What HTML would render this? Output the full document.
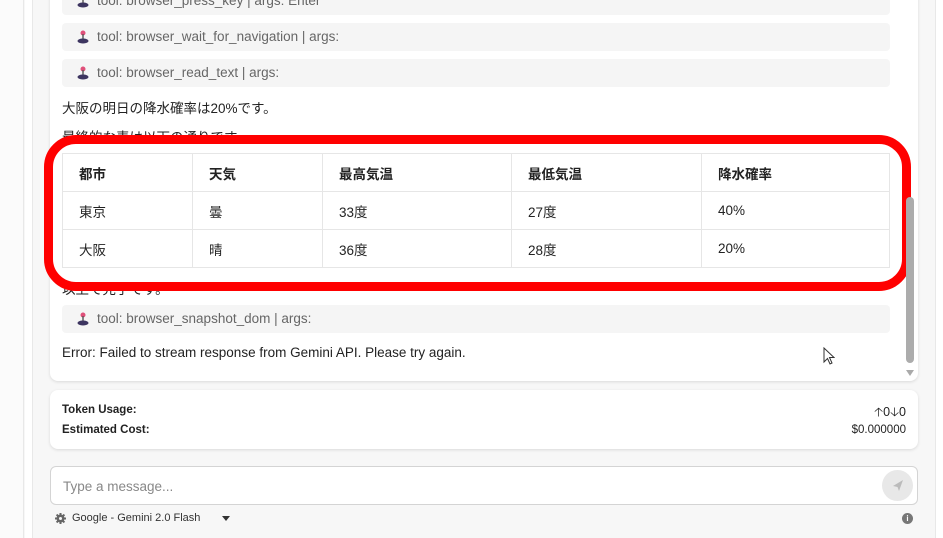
<!DOCTYPE html>
<html><head><meta charset="utf-8"><style>
*{box-sizing:border-box;margin:0;padding:0}
body{width:943px;height:538px;overflow:hidden;background:#f7f7f7;font-family:"Liberation Sans","Noto Sans CJK JP",sans-serif;position:relative;font-size:13.5px;color:#222}
.abs{position:absolute}
.tool{position:absolute;left:62px;width:828px;height:28px;background:#f5f5f5;border-radius:4px;color:#666;font-size:13.5px;line-height:28px;padding-left:35px}
.tool svg{position:absolute;left:15px;top:7px}
table{border-collapse:collapse;position:absolute;left:62px;top:153px;width:828px;font-size:13.5px}
td,th{border:1px solid #e6e6e6;height:38px;padding-left:16px;text-align:left}
th{font-weight:bold}
</style></head><body>
<div class="abs" style="left:0;top:0;width:24px;height:538px;background:#fbfbfb;border-right:1px solid #e8e8e8"></div>
<div class="abs" style="left:25px;top:0;width:8px;height:538px;background:#fff;border-right:1px solid #e8e8e8"></div>
<div class="abs" style="left:935px;top:0;width:8px;height:538px;background:#fff;border-left:1px solid #e8e8e8"></div>
<div class="abs" style="left:50px;top:-10px;width:868px;height:391px;background:#fff;border-radius:8px;box-shadow:0 1px 3px rgba(0,0,0,.12)"></div>
<div class="tool" style="top:-13px">tool: browser_press_key | args: Enter<svg width="12" height="14" viewBox="0 0 12 14"><circle cx="6" cy="3" r="2.5" fill="#e0507a"/><rect x="5.3" y="4" width="1.4" height="5" fill="#555"/><ellipse cx="6" cy="11" rx="5.5" ry="2.5" fill="#3d3560"/></svg></div>
<div class="tool" style="top:23px">tool: browser_wait_for_navigation | args:<svg width="12" height="14" viewBox="0 0 12 14"><circle cx="6" cy="3" r="2.5" fill="#e0507a"/><rect x="5.3" y="4" width="1.4" height="5" fill="#555"/><ellipse cx="6" cy="11" rx="5.5" ry="2.5" fill="#3d3560"/></svg></div>
<div class="tool" style="top:59px">tool: browser_read_text | args:<svg width="12" height="14" viewBox="0 0 12 14"><circle cx="6" cy="3" r="2.5" fill="#e0507a"/><rect x="5.3" y="4" width="1.4" height="5" fill="#555"/><ellipse cx="6" cy="11" rx="5.5" ry="2.5" fill="#3d3560"/></svg></div>
<div class="abs" style="left:62px;top:97px">大阪の明日の降水確率は20%です。</div>
<div class="abs" style="left:62px;top:126px">最終的な表は以下の通りです。</div>
<div class="abs" style="left:62px;top:278px">以上で完了です。</div>
<table>
<tr><th style="width:130px">都市</th><th style="width:130px">天気</th><th style="width:189px">最高気温</th><th style="width:190px">最低気温</th><th>降水確率</th></tr>
<tr><td>東京</td><td>曇</td><td>33度</td><td>27度</td><td>40%</td></tr>
<tr><td>大阪</td><td>晴</td><td>36度</td><td>28度</td><td>20%</td></tr>
</table>
<div class="abs" style="left:44px;top:135px;width:867px;height:156px;border:9px solid #ff0000;border-radius:32px"></div>
<div class="tool" style="top:305px">tool: browser_snapshot_dom | args:<svg width="12" height="14" viewBox="0 0 12 14"><circle cx="6" cy="3" r="2.5" fill="#e0507a"/><rect x="5.3" y="4" width="1.4" height="5" fill="#555"/><ellipse cx="6" cy="11" rx="5.5" ry="2.5" fill="#3d3560"/></svg></div>
<div class="abs" style="left:62px;top:345px">Error: Failed to stream response from Gemini API. Please try again.</div>
<div class="abs" style="left:906px;top:197px;width:8px;height:166px;background:#acacac;border-radius:4px"></div>
<div class="abs" style="left:906px;top:370px;width:0;height:0;border-left:4px solid transparent;border-right:4px solid transparent;border-top:6px solid #aaa"></div>
<svg class="abs" style="left:823px;top:347px" width="12" height="20" viewBox="0 0 12 20"><path d="M1 1 L1 15 L4.5 11.5 L7 17 L9 16 L6.5 10.5 L11 10.5 Z" fill="#fff" stroke="#333" stroke-width="1"/></svg>
<div class="abs" style="left:50px;top:390px;width:868px;height:59px;background:#fff;border-radius:8px;box-shadow:0 1px 3px rgba(0,0,0,.12);font-size:11.5px;font-weight:bold">
<div class="abs" style="left:12px;top:14px">Token Usage:</div>
<div class="abs" style="left:12px;top:34px">Estimated Cost:</div>
<div class="abs" style="right:12px;top:13px;font-weight:normal;font-size:12.5px">🡡0🡣0</div>
<div class="abs" style="right:12px;top:34px;font-weight:normal">$0.000000</div>
</div>
<div class="abs" style="left:50px;top:466px;width:868px;height:39px;background:#fff;border:1px solid #d4d4d4;border-radius:6px">
<div class="abs" style="left:12px;top:12px;color:#888;font-size:13.5px">Type a message...</div>
<div class="abs" style="right:4px;top:3px;width:31px;height:31px;border-radius:50%;background:#e8e8e8"><svg width="31" height="31" viewBox="0 0 31 31"><path d="M11 16 L21 10 L17 21 L15.5 17 Z" fill="#bbb"/></svg></div>
</div>
<svg class="abs" style="left:55px;top:513px" width="11" height="11" viewBox="0 0 11 11"><path d="M5.5 0v11M0 5.5h11M1.6 1.6l7.8 7.8M9.4 1.6l-7.8 7.8" stroke="#666" stroke-width="2"/><circle cx="5.5" cy="5.5" r="4" fill="#666"/><circle cx="5.5" cy="5.5" r="1.5" fill="#f7f7f7"/></svg>
<div class="abs" style="left:72px;top:512px;font-size:11px;color:#333">Google - Gemini 2.0 Flash</div>
<div class="abs" style="left:222px;top:516px;border-left:4px solid transparent;border-right:4px solid transparent;border-top:5px solid #333"></div>
<div class="abs" style="left:902px;top:513px;width:11px;height:11px;border-radius:50%;background:#777;color:#fff;font-size:8px;text-align:center;line-height:11px;font-weight:bold">i</div>
</body></html>
